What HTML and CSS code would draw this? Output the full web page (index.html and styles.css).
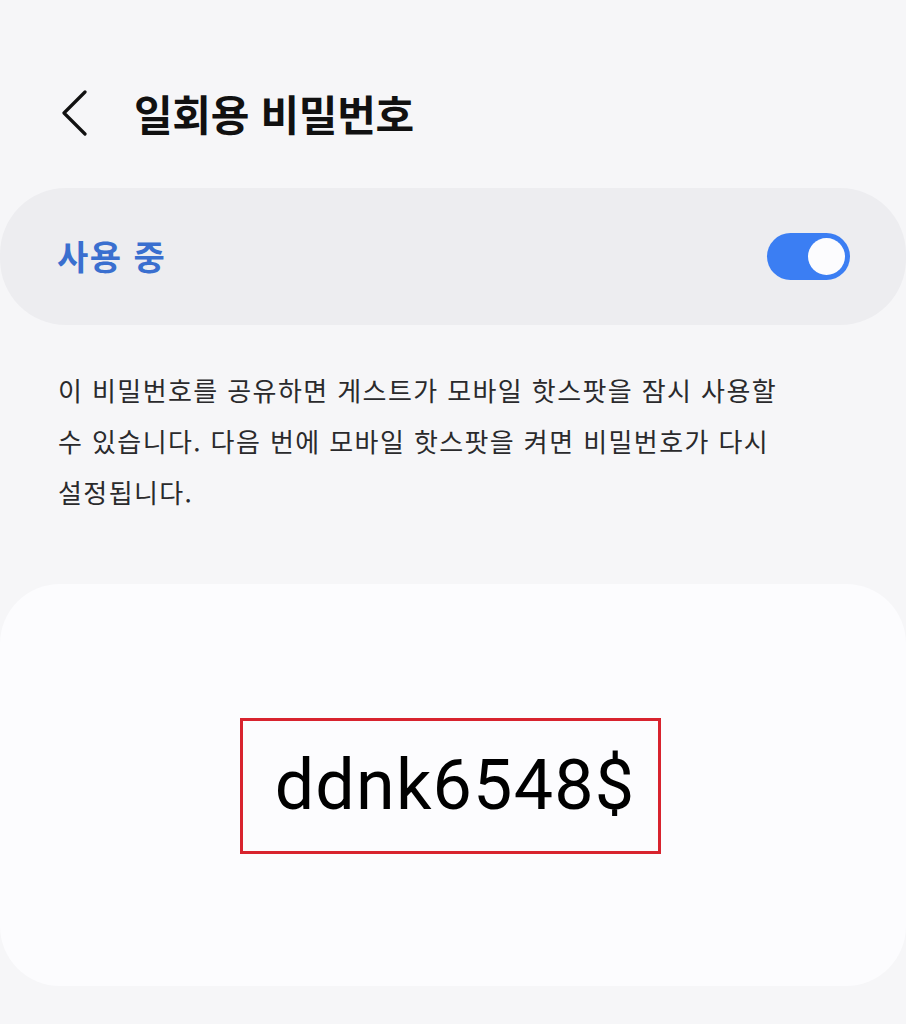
FILE: index.html
```html
<!DOCTYPE html>
<html lang="ko">
<head>
<meta charset="utf-8">
<title>일회용 비밀번호</title>
<link rel="stylesheet" href="styles.css">
</head>
<body>
<div class="screen">
  <header class="header">
    <svg class="back" width="28" height="46" viewBox="0 0 28 46" aria-hidden="true">
      <path d="M24 2 L3 23 L24 44" fill="none" stroke="#111" stroke-width="3.2" stroke-linecap="round" stroke-linejoin="round"/>
    </svg>
    <h1 class="title">일회용 비밀번호</h1>
  </header>

  <section class="status-card">
    <span class="status-label">사용 중</span>
    <span class="switch"><span class="thumb"></span></span>
  </section>

  <p class="desc">
    <span class="line">이 비밀번호를 공유하면 게스트가 모바일 핫스팟을 잠시 사용할</span>
    <span class="line">수 있습니다. 다음 번에 모바일 핫스팟을 켜면 비밀번호가 다시</span>
    <span class="line">설정됩니다.</span>
  </p>

  <section class="password-card">
    <div class="password-box">ddnk6548$</div>
  </section>
</div>
</body>
</html>
```

FILE: styles.css
```css
* { box-sizing: border-box; }
html, body { margin: 0; padding: 0; }
body {
  background: #f6f6f8;
  font-family: "Noto Sans CJK KR", "Noto Sans", sans-serif;
  color: #111;
  width: 906px;
  height: 1024px;
  overflow: hidden;
}
.screen { display: flex; flex-direction: column; }

.header {
  display: flex;
  align-items: center;
  height: 50px;
  margin-top: 88px;
  padding-left: 61px;
}
.back { display: block; flex: none; }
.title {
  margin: 0 0 0 45px;
  font-size: 42px;
  font-weight: 700;
  line-height: 50px;
  letter-spacing: -0.3px;
  color: #111;
}

.status-card {
  margin-top: 50px;
  height: 137px;
  background: #ededf0;
  border-radius: 66px;
  display: flex;
  align-items: center;
  justify-content: space-between;
  padding: 0 56px 0 57px;
}
.status-label {
  font-size: 34px;
  font-weight: 700;
  letter-spacing: 1.5px;
  color: #3a6fcf;
  margin-top: -2px;
}
.switch {
  width: 83px;
  height: 47px;
  border-radius: 24px;
  background: #3b7ef3;
  display: flex;
  align-items: center;
  justify-content: flex-end;
  padding-right: 5px;
}
.thumb {
  width: 37px;
  height: 37px;
  border-radius: 50%;
  background: #fcfcfe;
}

.desc {
  margin: 39px 0 0 58px;
  font-size: 26px;
  line-height: 51px;
  letter-spacing: 1.4px;
  color: #2a2a2c;
}
.line { display: block; white-space: nowrap; }

.password-card {
  margin-top: 67px;
  height: 402px;
  background: #fcfcfe;
  border-radius: 60px;
  display: flex;
  align-items: center;
  justify-content: center;
}
.password-box {
  width: 421px;
  height: 136px;
  border: 3px solid #d8232e;
  display: flex;
  align-items: center;
  justify-content: center;
  padding: 0 0 2px 10px;
  margin-left: -6px;
  margin-top: 2px;
  font-family: Roboto, "Noto Sans", sans-serif;
  font-size: 70px;
  letter-spacing: 1.2px;
  color: #000;
}
```
